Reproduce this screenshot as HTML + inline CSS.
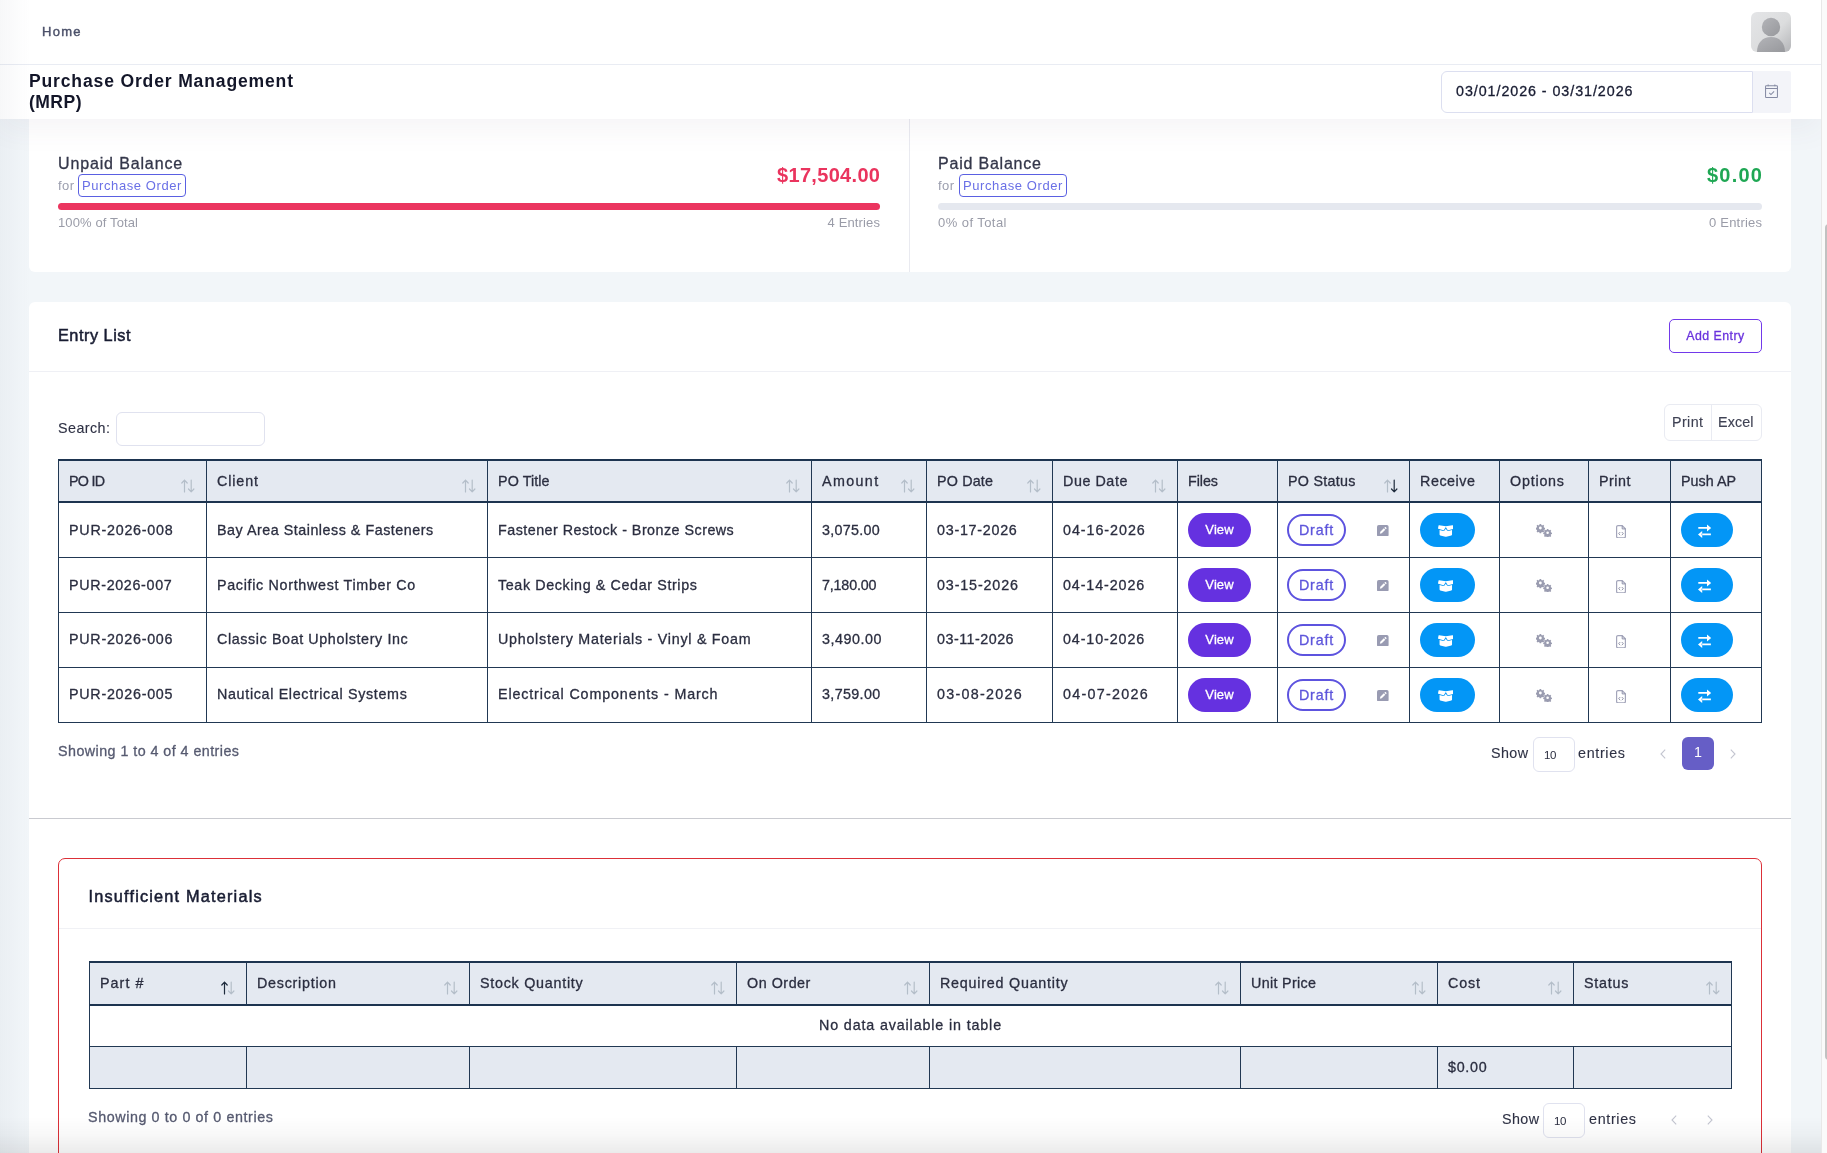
<!DOCTYPE html>
<html lang="en">
<head>
<meta charset="utf-8">
<title>Purchase Order Management (MRP)</title>
<style>
*{box-sizing:border-box;margin:0;padding:0}
html,body{width:1827px;height:1153px;overflow:hidden}
body{position:relative;background:#f2f6f9;font-family:"Liberation Sans",sans-serif;font-size:14.3px;color:#2b2e40;-webkit-font-smoothing:antialiased}
#page{position:absolute;left:0;top:0;width:1827px;height:1153px;overflow:hidden;will-change:transform}
.f{white-space:nowrap;display:inline-block}
.m{-webkit-text-stroke:.3px currentColor}
.abs{position:absolute}
/* page gradient from sidebar shadow */
#lshade{left:0;top:0;width:30px;height:1153px;background:linear-gradient(90deg,rgba(110,120,140,.055),rgba(110,120,140,0));z-index:50;pointer-events:none}
#bshade{left:0;top:1117px;width:1821px;height:36px;background:linear-gradient(180deg,rgba(0,0,0,0),rgba(0,0,0,.028) 50%,rgba(0,0,0,.078));z-index:50;pointer-events:none}
/* scrollbar */
#sb{left:1821px;top:0;width:6px;height:1153px;background:#fafafa;border-left:1px solid #e8e8e8;z-index:60}
#sbt{left:3px;top:224px;width:8px;height:836px;background:#c1c1c1;border-radius:4px}
/* top header */
#top{left:0;top:0;width:1821px;height:65px;background:#fff;border-bottom:1px solid #e9ecf3;z-index:20}
#home{left:42px;top:24px;font-size:13px;color:#4b5069;line-height:16px;-webkit-text-stroke:.4px currentColor}
#avatar{left:1751px;top:12px;width:40px;height:40px;border-radius:6px;overflow:hidden}
/* sub header */
#sub{left:0;top:65px;width:1821px;height:54px;background:#fff;z-index:19;box-shadow:0 10px 30px rgba(82,63,105,.06)}
#title{left:29px;top:6px;font-size:17.55px;line-height:21px;font-weight:700;color:#131629}
#date{left:1441px;top:6px;width:312px;height:42px;border:1px solid #dcdff0;border-radius:6px 0 0 6px;background:#fff}
#date .f{position:absolute;left:14px;top:11px;line-height:16px;color:#181c32}
#cal{left:1753px;top:6px;width:38px;height:42px;background:#f3f4f9;border-radius:0 2px 2px 0}
/* card 1 */
#c1{left:29px;top:100px;width:1762px;height:172px;background:#fff;border-radius:6px;z-index:1}
#c1 .vd{left:880px;top:0;width:1px;height:172px;background:#e9eaf0}
.bal{position:absolute;top:0;height:171px}
.bal .h{position:absolute;left:0;top:55px;font-size:16px;line-height:18px;color:#34374a}
.bal .for{position:absolute;left:0;top:78px;font-size:13px;line-height:16px;color:#9b9eae}
.bal .bdg{position:absolute;top:74px;height:23px;width:108px;border:1px solid #5a60e2;border-radius:4px;font-size:13px;line-height:21px;color:#6a70e6;text-align:center}
.bal .amt{position:absolute;right:0;top:63px;font-size:20px;line-height:24px;font-weight:700}
.bal .bar{position:absolute;left:0;top:103px;height:7px;width:100%;border-radius:4px;background:#e5e8ef}
.bal .pl{position:absolute;left:0;top:115px;font-size:13px;line-height:16px;color:#9a9ca8}
.bal .pr{position:absolute;right:0;top:115px;font-size:13px;line-height:16px;color:#9a9ca8}
/* card 2 */
#c2{left:29px;top:302px;width:1762px;height:900px;background:#fff;border-radius:6px 6px 0 0;z-index:1}
#c2h{left:0;top:0;width:1762px;height:70px;border-bottom:1px solid #eff0f5}
#c2h .ttl{position:absolute;left:29px;top:23px;-webkit-text-stroke:.5px currentColor;font-size:16.3px;line-height:20px;color:#181c32}
#add{left:1640px;top:17px;width:93px;height:34px;border:1px solid #7239ea;border-radius:5px;color:#6a33dd;font-size:12.35px;line-height:32px;text-align:center}
#srch{left:29px;top:118px;line-height:16px;color:#2f3245;-webkit-text-stroke:.12px currentColor}
#sin{left:87px;top:110px;width:149px;height:34px;border:1px solid #e0e2ef;border-radius:6px}
#btns{left:1635px;top:102px;width:98px;height:37px;border:1px solid #e9ebf2;border-radius:6px}
#btns i{position:absolute;left:46px;top:0;width:1px;height:35px;background:#e9ebf2}
#btns .f{position:absolute;top:9px;line-height:16px;color:#3f4254;-webkit-text-stroke:.12px currentColor}
table{border-collapse:separate;border-spacing:0;table-layout:fixed}
th,td{border-left:1px solid #213853;border-bottom:1px solid #213853;padding:0 0 0 10px;text-align:left;vertical-align:middle;font-weight:400;position:relative;white-space:nowrap}
th:last-child,td:last-child{border-right:1px solid #213853}
thead th{background:#e4e9f1;border-top:2px solid #1d3450;border-bottom:2px solid #1d3450;height:44px;color:#2b2e40}
#t2 thead th{height:45px}
tfoot td{background:#e4e9f1;height:42px}
#t1{left:29px;top:157px;width:1704px}
#t1 td{height:55px}
#t2 tbody td{height:41px}
#t2 .f{position:relative;top:-1px}
.so{position:absolute;right:11px;top:18px;width:14px;height:14px}
.pill{display:inline-block;height:34px;border-radius:17px;vertical-align:middle;text-align:center}
.view{width:63px;background:#6531e0;color:#fff;font-size:13px;line-height:34px}
.draft{width:59px;height:32px;border:2px solid #5d53df;color:#5d55db;line-height:28px;background:#fff}
.rcv{width:55px;background:#0396f6}
.psh{width:52px;background:#0396f6}
.ic{position:absolute}
.info{color:#565a70;line-height:16px}
.len{line-height:16px;color:#2f3245;-webkit-text-stroke:.12px currentColor}
.sel{width:42px;height:35px;border:1px solid #e0e2ef;border-radius:6px;font-size:11.500px;letter-spacing:-.3px;line-height:35px;padding-left:10px;color:#2b2e40}
.pg{width:32px;height:33px;border-radius:6px;background:#665ec6;color:#fff;text-align:center;line-height:31px;font-size:14.3px}
.chev{width:6px;height:10px}
#hr{left:0;top:516px;width:1762px;height:1px;background:#c9cad0}
/* card 3 */
#c3{left:29px;top:556px;width:1704px;height:400px;border:1px solid #dc3038;border-radius:7px 7px 0 0;background:#fff}
#c3h{left:0;top:0;width:1702px;height:70px;border-bottom:1px solid #f0f1f5}
#c3h .ttl{position:absolute;left:29.500px;top:27px;-webkit-text-stroke:.5px currentColor;font-size:16.3px;line-height:20px;color:#181c32}
#t2{left:30px;top:102px;width:1643px}
</style>
</head>
<body>
<div id="page">
<div id="lshade" class="abs"></div>
<div id="bshade" class="abs"></div>
<div id="sb" class="abs"><div id="sbt" class="abs"></div></div>

<div id="top" class="abs">
  <a id="home" class="abs f m" style="letter-spacing:1.27px">Home</a>
  <div id="avatar" class="abs">
    <svg width="40" height="40" viewBox="0 0 40 40"><defs><linearGradient id="ag" x1="0" y1="0" x2="1" y2="1"><stop offset="0" stop-color="#e4e5e7"/><stop offset=".55" stop-color="#dcddde"/><stop offset="1" stop-color="#b4b5b8"/></linearGradient><linearGradient id="ap" x1="0" y1="0" x2="1" y2="1"><stop offset="0" stop-color="#b3b4b8"/><stop offset="1" stop-color="#97989c"/></linearGradient></defs><rect width="40" height="40" fill="url(#ag)"/><circle cx="20" cy="15" r="9.2" fill="url(#ap)"/><path d="M6 40c0-9 5.5-15 14-15s14 6 14 15z" fill="url(#ap)"/></svg>
  </div>
</div>

<div id="sub" class="abs">
  <h1 id="title" class="abs"><span class="f" style="letter-spacing:0.85px">Purchase Order Management</span><br><span class="f" style="letter-spacing:0.46px">(MRP)</span></h1>
  <div id="date" class="abs"><span class="f m" style="letter-spacing:0.94px">03/01/2026 - 03/31/2026</span></div>
  <div id="cal" class="abs">
    <svg class="ic" style="left:12px;top:13px" width="13" height="14.200" viewBox="0 0 14 15" fill="none" stroke="#858aa3" stroke-width="1.1"><rect x=".6" y="1.8" width="12.8" height="12.6" rx=".8"/><path d="M.6 4.6h12.8M3.4 .4v2M10.6 .4v2M4.6 9.4l1.8 1.8 3.4-3.4"/></svg>
  </div>
</div>

<div id="c1" class="abs">
  <div class="vd abs"></div>
  <div class="bal" style="left:29px;width:822px">
    <div class="h f m" style="letter-spacing:0.86px">Unpaid Balance</div>
    <div class="for f" style="letter-spacing:0.41px">for</div>
    <div class="bdg" style="left:20px"><span class="f" style="letter-spacing:0.59px">Purchase Order</span></div>
    <div class="amt f" style="color:#ea345e;letter-spacing:0.32px;margin-right:-0.32px">$17,504.00</div>
    <div class="bar" style="background:#eb355f"></div>
    <div class="pl f" style="letter-spacing:0.12px">100% of Total</div>
    <div class="pr f" style="letter-spacing:0.15px;margin-right:-0.15px">4 Entries</div>
  </div>
  <div class="bal" style="left:909px;width:824px">
    <div class="h f m" style="letter-spacing:0.79px">Paid Balance</div>
    <div class="for f" style="letter-spacing:0.41px">for</div>
    <div class="bdg" style="left:21px"><span class="f" style="letter-spacing:0.59px">Purchase Order</span></div>
    <div class="amt f" style="color:#1fa754;letter-spacing:1.23px;margin-right:-1.23px">$0.00</div>
    <div class="bar"></div>
    <div class="pl f" style="letter-spacing:0.44px">0% of Total</div>
    <div class="pr f" style="letter-spacing:0.21px;margin-right:-0.21px">0 Entries</div>
  </div>
</div>

<div id="c2" class="abs">
  <div id="c2h" class="abs">
    <h3 class="ttl f m" style="letter-spacing:0.51px;font-weight:400">Entry List</h3>
    <a id="add" class="abs"><span class="f m" style="letter-spacing:0.47px">Add Entry</span></a>
  </div>
  <label id="srch" class="abs f" style="letter-spacing:0.45px">Search:</label>
  <div id="sin" class="abs"></div>
  <div id="btns" class="abs"><i></i><span class="f" style="left:7px;letter-spacing:0.40px">Print</span><span class="f" style="left:53px;letter-spacing:0.13px">Excel</span></div>

  <table id="t1" class="abs">
    <colgroup><col style="width:148px"><col style="width:281px"><col style="width:324px"><col style="width:115px"><col style="width:126px"><col style="width:125px"><col style="width:100px"><col style="width:132px"><col style="width:90px"><col style="width:89px"><col style="width:82px"><col style="width:92px"></colgroup>
    <thead><tr>
      <th><span class="f m" style="letter-spacing:-0.73px">PO ID</span><svg class="so" viewBox="0 0 14 14" fill="none" stroke-width="1.2" stroke-linecap="round" stroke-linejoin="round"><path stroke="#b4bec9" d="M3.5 13V1.2M.8 4L3.5 1.1 6.2 4"/><path stroke="#b4bec9" d="M10.2 1v11.8M7.5 10l2.7 2.9 2.7-2.9"/></svg></th>
      <th><span class="f m" style="letter-spacing:0.89px">Client</span><svg class="so" viewBox="0 0 14 14" fill="none" stroke-width="1.2" stroke-linecap="round" stroke-linejoin="round"><path stroke="#b4bec9" d="M3.5 13V1.2M.8 4L3.5 1.1 6.2 4"/><path stroke="#b4bec9" d="M10.2 1v11.8M7.5 10l2.7 2.9 2.7-2.9"/></svg></th>
      <th><span class="f m" style="letter-spacing:0.09px">PO Title</span><svg class="so" viewBox="0 0 14 14" fill="none" stroke-width="1.2" stroke-linecap="round" stroke-linejoin="round"><path stroke="#b4bec9" d="M3.5 13V1.2M.8 4L3.5 1.1 6.2 4"/><path stroke="#b4bec9" d="M10.2 1v11.8M7.5 10l2.7 2.9 2.7-2.9"/></svg></th>
      <th><span class="f m" style="letter-spacing:1.38px">Amount</span><svg class="so" viewBox="0 0 14 14" fill="none" stroke-width="1.2" stroke-linecap="round" stroke-linejoin="round"><path stroke="#b4bec9" d="M3.5 13V1.2M.8 4L3.5 1.1 6.2 4"/><path stroke="#b4bec9" d="M10.2 1v11.8M7.5 10l2.7 2.9 2.7-2.9"/></svg></th>
      <th><span class="f m" style="letter-spacing:0.18px">PO Date</span><svg class="so" viewBox="0 0 14 14" fill="none" stroke-width="1.2" stroke-linecap="round" stroke-linejoin="round"><path stroke="#b4bec9" d="M3.5 13V1.2M.8 4L3.5 1.1 6.2 4"/><path stroke="#b4bec9" d="M10.2 1v11.8M7.5 10l2.7 2.9 2.7-2.9"/></svg></th>
      <th><span class="f m" style="letter-spacing:0.57px">Due Date</span><svg class="so" viewBox="0 0 14 14" fill="none" stroke-width="1.2" stroke-linecap="round" stroke-linejoin="round"><path stroke="#b4bec9" d="M3.5 13V1.2M.8 4L3.5 1.1 6.2 4"/><path stroke="#b4bec9" d="M10.2 1v11.8M7.5 10l2.7 2.9 2.7-2.9"/></svg></th>
      <th><span class="f m" style="letter-spacing:-0.05px">Files</span></th>
      <th><span class="f m" style="letter-spacing:0.29px">PO Status</span><svg class="so" viewBox="0 0 14 14" fill="none" stroke-width="1.2" stroke-linecap="round" stroke-linejoin="round"><path stroke="#b4bec9" d="M3.5 13V1.2M.8 4L3.5 1.1 6.2 4"/><path stroke="#1e2b3c" d="M10.2 1v11.8M7.5 10l2.7 2.9 2.7-2.9"/></svg></th>
      <th><span class="f m" style="letter-spacing:0.56px">Receive</span></th>
      <th><span class="f m" style="letter-spacing:0.79px">Options</span></th>
      <th><span class="f m" style="letter-spacing:0.52px">Print</span></th>
      <th><span class="f m" style="letter-spacing:0.03px">Push AP</span></th>
    </tr></thead>
    <tbody>
      <tr><td><span class="f m" style="letter-spacing:0.76px">PUR-2026-008</span></td><td><span class="f m" style="letter-spacing:0.52px">Bay Area Stainless &amp; Fasteners</span></td><td><span class="f m" style="letter-spacing:0.48px">Fastener Restock - Bronze Screws</span></td><td><span class="f m" style="letter-spacing:0.29px">3,075.00</span></td><td><span class="f m" style="letter-spacing:0.74px">03-17-2026</span></td><td><span class="f m" style="letter-spacing:0.96px">04-16-2026</span></td><td><a class="pill view"><span class="f m" style="letter-spacing:0.08px">View</span></a></td><td><a class="pill draft" style="margin-left:-1px"><span class="f m" style="letter-spacing:0.83px">Draft</span></a><svg class="ic" style="left:99.200px;top:21.500px" width="11.600" height="11.600" viewBox="0 0 12 12"><rect width="12" height="12" rx="1.800" fill="#999bb2"/><path d="M3 9l.4-1.9 3.7-3.7 1.5 1.5-3.7 3.7zM7.6 2.9l.6-.6c.3-.3.7-.3 1 0l.5.5c.3.3.3.7 0 1l-.6.6z" fill="#fff"/></svg></td><td><a class="pill rcv"><svg width="15.600" height="11.700" viewBox="0 0 16 12.400" preserveAspectRatio="none" style="margin-top:12px;position:relative;left:-2px"><path fill="#fff" d="M1.2 0.3L8 1.2l6.8-.9c.3 0 .5.1.6.3L16 3.4c.1.3-.1.6-.4.7L10.6 5.5c-.3.1-.6 0-.7-.3L8 2.2 6.100 5.2c-.1.3-.4.4-.7.3L.4 4.100C.1 4 -.1 3.700 0 3.400L.6.6c.1-.2.3-.3.6-.3zM1.600 5.400l3.600 1c.7.2 1.400-.1 1.700-.7L8 3.900l1.100 1.800c.3.6 1 .9 1.700.7l3.600-1v4.800c0 .4-.3.8-.7.9l-5.300 1.300c-.3.1-.5.1-.8 0L2.300 11.100c-.4-.1-.7-.5-.7-.9z"/></svg></a></td><td><svg class="ic" style="left:36px;top:21px" width="16" height="13" viewBox="0 0 17 14" fill="#9a9cb0"><g transform="translate(4.600 4.300)"><path d="M-.8-4.300h1.600l.3 1.100.9.400 1-.600 1.100 1.100-.6 1 .4.900 1.100.3v1.600l-1.100.3-.4.900.6 1-1.100 1.100-1-.6-.9.400-.3 1.100h-1.600l-.3-1.100-.9-.4-1 .6-1.100-1.100.6-1-.4-.9-1.100-.3v-1.600l1.100-.3.400-.9-.6-1 1.100-1.100 1 .6.900-.4zM0-1.500a1.500 1.500 0 100 3 1.500 1.500 0 000-3z"/></g><g transform="translate(12.400 9.400) scale(.95)"><path d="M-.8-4.300h1.600l.3 1.100.9.400 1-.600 1.100 1.100-.6 1 .4.900 1.100.3v1.600l-1.100.3-.4.900.6 1-1.100 1.100-1-.6-.9.400-.3 1.100h-1.600l-.3-1.100-.9-.4-1 .6-1.100-1.100.6-1-.4-.9-1.100-.3v-1.600l1.100-.3.400-.9-.6-1 1.100-1.100 1 .6.900-.4zM0-1.500a1.500 1.500 0 100 3 1.500 1.500 0 000-3z"/></g></svg></td><td><svg class="ic" style="left:27.100px;top:22px" width="10" height="13.400" viewBox="0 0 10 13.400" fill="none" stroke="#a3a5ba" stroke-width="1.200"><path d="M2 .6h4.200L9.400 3.800V11.400a1.400 1.400 0 01-1.400 1.400H2A1.400 1.400 0 01.6 11.400V2A1.400 1.400 0 012 .6z"/><path d="M6.200 .8V3.900h3.100" stroke="#8d8fa8" stroke-width="1"/><path d="M4.200 7.100L2.700 8.600l1.500 1.500M5.800 7.100l1.500 1.500-1.500 1.500" stroke="#7f8199" stroke-width=".9"/></svg></td><td><a class="pill psh"><svg width="13.200" height="13" viewBox="0 0 13.200 13" overflow="visible" style="margin-top:12px;position:relative;left:-2px" fill="#fff"><path d="M.3 2h9.300v1.800H.3zM9 -.6L13.200 2.900 9 6.400zM3.600 8.500h9.300v1.800H3.600zM4.200 5.900L0 9.400l4.200 3.500z"/></svg></a></td></tr>
      <tr><td><span class="f m" style="letter-spacing:0.67px">PUR-2026-007</span></td><td><span class="f m" style="letter-spacing:0.69px">Pacific Northwest Timber Co</span></td><td><span class="f m" style="letter-spacing:0.62px">Teak Decking &amp; Cedar Strips</span></td><td><span class="f m" style="letter-spacing:-0.17px">7,180.00</span></td><td><span class="f m" style="letter-spacing:0.87px">03-15-2026</span></td><td><span class="f m" style="letter-spacing:0.90px">04-14-2026</span></td><td><a class="pill view"><span class="f m" style="letter-spacing:0.08px">View</span></a></td><td><a class="pill draft" style="margin-left:-1px"><span class="f m" style="letter-spacing:0.83px">Draft</span></a><svg class="ic" style="left:99.200px;top:21.500px" width="11.600" height="11.600" viewBox="0 0 12 12"><rect width="12" height="12" rx="1.800" fill="#999bb2"/><path d="M3 9l.4-1.9 3.7-3.7 1.5 1.5-3.7 3.7zM7.6 2.9l.6-.6c.3-.3.7-.3 1 0l.5.5c.3.3.3.7 0 1l-.6.6z" fill="#fff"/></svg></td><td><a class="pill rcv"><svg width="15.600" height="11.700" viewBox="0 0 16 12.400" preserveAspectRatio="none" style="margin-top:12px;position:relative;left:-2px"><path fill="#fff" d="M1.2 0.3L8 1.2l6.8-.9c.3 0 .5.1.6.3L16 3.4c.1.3-.1.6-.4.7L10.6 5.5c-.3.1-.6 0-.7-.3L8 2.2 6.100 5.2c-.1.3-.4.4-.7.3L.4 4.100C.1 4 -.1 3.700 0 3.400L.6.6c.1-.2.3-.3.6-.3zM1.600 5.400l3.600 1c.7.2 1.400-.1 1.700-.7L8 3.900l1.100 1.800c.3.6 1 .9 1.700.7l3.600-1v4.800c0 .4-.3.8-.7.9l-5.300 1.300c-.3.1-.5.1-.8 0L2.300 11.100c-.4-.1-.7-.5-.7-.9z"/></svg></a></td><td><svg class="ic" style="left:36px;top:21px" width="16" height="13" viewBox="0 0 17 14" fill="#9a9cb0"><g transform="translate(4.600 4.300)"><path d="M-.8-4.300h1.600l.3 1.100.9.400 1-.600 1.100 1.100-.6 1 .4.900 1.100.3v1.600l-1.100.3-.4.900.6 1-1.100 1.100-1-.6-.9.400-.3 1.100h-1.600l-.3-1.100-.9-.4-1 .6-1.100-1.100.6-1-.4-.9-1.100-.3v-1.600l1.100-.3.400-.9-.6-1 1.100-1.100 1 .6.900-.4zM0-1.500a1.500 1.500 0 100 3 1.500 1.500 0 000-3z"/></g><g transform="translate(12.400 9.400) scale(.95)"><path d="M-.8-4.300h1.600l.3 1.100.9.400 1-.600 1.100 1.100-.6 1 .4.900 1.100.3v1.600l-1.100.3-.4.900.6 1-1.100 1.100-1-.6-.9.400-.3 1.100h-1.600l-.3-1.100-.9-.4-1 .6-1.100-1.100.6-1-.4-.9-1.100-.3v-1.600l1.100-.3.400-.9-.6-1 1.100-1.100 1 .6.900-.4zM0-1.500a1.500 1.500 0 100 3 1.500 1.500 0 000-3z"/></g></svg></td><td><svg class="ic" style="left:27.100px;top:22px" width="10" height="13.400" viewBox="0 0 10 13.400" fill="none" stroke="#a3a5ba" stroke-width="1.200"><path d="M2 .6h4.200L9.400 3.800V11.400a1.400 1.400 0 01-1.400 1.400H2A1.400 1.400 0 01.6 11.400V2A1.400 1.400 0 012 .6z"/><path d="M6.200 .8V3.900h3.100" stroke="#8d8fa8" stroke-width="1"/><path d="M4.200 7.100L2.700 8.600l1.500 1.500M5.800 7.100l1.500 1.500-1.500 1.500" stroke="#7f8199" stroke-width=".9"/></svg></td><td><a class="pill psh"><svg width="13.200" height="13" viewBox="0 0 13.200 13" overflow="visible" style="margin-top:12px;position:relative;left:-2px" fill="#fff"><path d="M.3 2h9.300v1.800H.3zM9 -.6L13.200 2.900 9 6.400zM3.600 8.500h9.300v1.800H3.600zM4.200 5.900L0 9.400l4.200 3.500z"/></svg></a></td></tr>
      <tr><td><span class="f m" style="position:relative;top:-1px;letter-spacing:0.74px">PUR-2026-006</span></td><td><span class="f m" style="position:relative;top:-1px;letter-spacing:0.61px">Classic Boat Upholstery Inc</span></td><td><span class="f m" style="position:relative;top:-1px;letter-spacing:0.73px">Upholstery Materials - Vinyl &amp; Foam</span></td><td><span class="f m" style="position:relative;top:-1px;letter-spacing:0.53px">3,490.00</span></td><td><span class="f m" style="position:relative;top:-1px;letter-spacing:0.50px">03-11-2026</span></td><td><span class="f m" style="position:relative;top:-1px;letter-spacing:0.90px">04-10-2026</span></td><td><a class="pill view"><span class="f m" style="letter-spacing:0.08px">View</span></a></td><td><a class="pill draft" style="margin-left:-1px"><span class="f m" style="letter-spacing:0.83px">Draft</span></a><svg class="ic" style="left:99.200px;top:21.500px" width="11.600" height="11.600" viewBox="0 0 12 12"><rect width="12" height="12" rx="1.800" fill="#999bb2"/><path d="M3 9l.4-1.9 3.7-3.7 1.5 1.5-3.7 3.7zM7.6 2.9l.6-.6c.3-.3.7-.3 1 0l.5.5c.3.3.3.7 0 1l-.6.6z" fill="#fff"/></svg></td><td><a class="pill rcv"><svg width="15.600" height="11.700" viewBox="0 0 16 12.400" preserveAspectRatio="none" style="margin-top:12px;position:relative;left:-2px"><path fill="#fff" d="M1.2 0.3L8 1.2l6.8-.9c.3 0 .5.1.6.3L16 3.4c.1.3-.1.6-.4.7L10.6 5.5c-.3.1-.6 0-.7-.3L8 2.2 6.100 5.2c-.1.3-.4.4-.7.3L.4 4.100C.1 4 -.1 3.700 0 3.400L.6.6c.1-.2.3-.3.6-.3zM1.600 5.400l3.600 1c.7.2 1.400-.1 1.700-.7L8 3.900l1.100 1.800c.3.6 1 .9 1.700.7l3.600-1v4.800c0 .4-.3.8-.7.9l-5.300 1.300c-.3.1-.5.1-.8 0L2.300 11.100c-.4-.1-.7-.5-.7-.9z"/></svg></a></td><td><svg class="ic" style="left:36px;top:21px" width="16" height="13" viewBox="0 0 17 14" fill="#9a9cb0"><g transform="translate(4.600 4.300)"><path d="M-.8-4.300h1.600l.3 1.100.9.400 1-.600 1.100 1.100-.6 1 .4.900 1.100.3v1.600l-1.100.3-.4.900.6 1-1.100 1.100-1-.6-.9.400-.3 1.100h-1.600l-.3-1.100-.9-.4-1 .6-1.100-1.100.6-1-.4-.9-1.100-.3v-1.600l1.100-.3.400-.9-.6-1 1.100-1.100 1 .6.900-.4zM0-1.500a1.500 1.500 0 100 3 1.500 1.500 0 000-3z"/></g><g transform="translate(12.400 9.400) scale(.95)"><path d="M-.8-4.300h1.600l.3 1.100.9.400 1-.600 1.100 1.100-.6 1 .4.900 1.100.3v1.600l-1.100.3-.4.900.6 1-1.100 1.100-1-.6-.9.400-.3 1.100h-1.600l-.3-1.100-.9-.4-1 .6-1.100-1.100.6-1-.4-.9-1.100-.3v-1.600l1.100-.3.400-.9-.6-1 1.100-1.100 1 .6.900-.4zM0-1.500a1.500 1.500 0 100 3 1.500 1.500 0 000-3z"/></g></svg></td><td><svg class="ic" style="left:27.100px;top:22px" width="10" height="13.400" viewBox="0 0 10 13.400" fill="none" stroke="#a3a5ba" stroke-width="1.200"><path d="M2 .6h4.200L9.400 3.800V11.400a1.400 1.400 0 01-1.400 1.400H2A1.400 1.400 0 01.6 11.400V2A1.400 1.400 0 012 .6z"/><path d="M6.200 .8V3.900h3.100" stroke="#8d8fa8" stroke-width="1"/><path d="M4.200 7.100L2.700 8.600l1.500 1.500M5.800 7.100l1.500 1.500-1.500 1.500" stroke="#7f8199" stroke-width=".9"/></svg></td><td><a class="pill psh"><svg width="13.200" height="13" viewBox="0 0 13.200 13" overflow="visible" style="margin-top:12px;position:relative;left:-2px" fill="#fff"><path d="M.3 2h9.300v1.800H.3zM9 -.6L13.200 2.900 9 6.400zM3.600 8.500h9.300v1.800H3.600zM4.200 5.900L0 9.400l4.200 3.500z"/></svg></a></td></tr>
      <tr><td><span class="f m" style="position:relative;top:-1px;letter-spacing:0.74px">PUR-2026-005</span></td><td><span class="f m" style="position:relative;top:-1px;letter-spacing:0.67px">Nautical Electrical Systems</span></td><td><span class="f m" style="position:relative;top:-1px;letter-spacing:0.86px">Electrical Components - March</span></td><td><span class="f m" style="position:relative;top:-1px;letter-spacing:0.36px">3,759.00</span></td><td><span class="f m" style="position:relative;top:-1px;letter-spacing:1.28px">03-08-2026</span></td><td><span class="f m" style="position:relative;top:-1px;letter-spacing:1.28px">04-07-2026</span></td><td><a class="pill view"><span class="f m" style="letter-spacing:0.08px">View</span></a></td><td><a class="pill draft" style="margin-left:-1px"><span class="f m" style="letter-spacing:0.83px">Draft</span></a><svg class="ic" style="left:99.200px;top:21.500px" width="11.600" height="11.600" viewBox="0 0 12 12"><rect width="12" height="12" rx="1.800" fill="#999bb2"/><path d="M3 9l.4-1.9 3.7-3.7 1.5 1.5-3.7 3.7zM7.6 2.9l.6-.6c.3-.3.7-.3 1 0l.5.5c.3.3.3.7 0 1l-.6.6z" fill="#fff"/></svg></td><td><a class="pill rcv"><svg width="15.600" height="11.700" viewBox="0 0 16 12.400" preserveAspectRatio="none" style="margin-top:12px;position:relative;left:-2px"><path fill="#fff" d="M1.2 0.3L8 1.2l6.8-.9c.3 0 .5.1.6.3L16 3.4c.1.3-.1.6-.4.7L10.6 5.5c-.3.1-.6 0-.7-.3L8 2.2 6.100 5.2c-.1.3-.4.4-.7.3L.4 4.100C.1 4 -.1 3.700 0 3.400L.6.6c.1-.2.3-.3.6-.3zM1.600 5.400l3.600 1c.7.2 1.400-.1 1.700-.7L8 3.900l1.100 1.800c.3.6 1 .9 1.700.7l3.600-1v4.800c0 .4-.3.8-.7.9l-5.300 1.300c-.3.1-.5.1-.8 0L2.300 11.100c-.4-.1-.7-.5-.7-.9z"/></svg></a></td><td><svg class="ic" style="left:36px;top:21px" width="16" height="13" viewBox="0 0 17 14" fill="#9a9cb0"><g transform="translate(4.600 4.300)"><path d="M-.8-4.300h1.600l.3 1.100.9.400 1-.600 1.100 1.100-.6 1 .4.900 1.100.3v1.600l-1.100.3-.4.900.6 1-1.100 1.100-1-.6-.9.400-.3 1.100h-1.600l-.3-1.100-.9-.4-1 .6-1.100-1.100.6-1-.4-.9-1.100-.3v-1.600l1.100-.3.400-.9-.6-1 1.100-1.100 1 .6.900-.4zM0-1.500a1.500 1.500 0 100 3 1.500 1.500 0 000-3z"/></g><g transform="translate(12.400 9.400) scale(.95)"><path d="M-.8-4.300h1.600l.3 1.100.9.400 1-.600 1.100 1.100-.6 1 .4.900 1.100.3v1.600l-1.100.3-.4.900.6 1-1.100 1.100-1-.6-.9.400-.3 1.100h-1.600l-.3-1.100-.9-.4-1 .6-1.100-1.100.6-1-.4-.9-1.100-.3v-1.600l1.100-.3.400-.9-.6-1 1.100-1.100 1 .6.900-.4zM0-1.500a1.500 1.500 0 100 3 1.500 1.500 0 000-3z"/></g></svg></td><td><svg class="ic" style="left:27.100px;top:22px" width="10" height="13.400" viewBox="0 0 10 13.400" fill="none" stroke="#a3a5ba" stroke-width="1.200"><path d="M2 .6h4.200L9.400 3.800V11.400a1.400 1.400 0 01-1.400 1.400H2A1.400 1.400 0 01.6 11.400V2A1.400 1.400 0 012 .6z"/><path d="M6.200 .8V3.900h3.100" stroke="#8d8fa8" stroke-width="1"/><path d="M4.200 7.100L2.700 8.600l1.500 1.500M5.800 7.100l1.500 1.500-1.500 1.500" stroke="#7f8199" stroke-width=".9"/></svg></td><td><a class="pill psh"><svg width="13.200" height="13" viewBox="0 0 13.200 13" overflow="visible" style="margin-top:12px;position:relative;left:-2px" fill="#fff"><path d="M.3 2h9.300v1.800H.3zM9 -.6L13.200 2.900 9 6.400zM3.600 8.500h9.300v1.800H3.600zM4.200 5.900L0 9.400l4.200 3.500z"/></svg></a></td></tr>
    </tbody>
  </table>

  <div class="info abs f m" style="left:29px;top:441px;letter-spacing:0.45px">Showing 1 to 4 of 4 entries</div>
  <div class="len abs f" style="left:1462px;top:443px;letter-spacing:0.41px">Show</div>
  <div class="sel abs" style="left:1504px;top:435px">10</div>
  <div class="len abs f" style="left:1549px;top:443px;letter-spacing:0.68px">entries</div>
  <svg class="chev abs" style="left:1631px;top:447px" viewBox="0 0 6 10" fill="none" stroke="#c3c5d0" stroke-width="1.1"><path d="M5.2 .7L1 5l4.2 4.3"/></svg>
  <div class="pg abs" style="left:1653px;top:435px">1</div>
  <svg class="chev abs" style="left:1701px;top:447px" viewBox="0 0 6 10" fill="none" stroke="#c3c5d0" stroke-width="1.1"><path d="M.8 .7L5 5 .8 9.3"/></svg>

  <div id="hr" class="abs"></div>

  <div id="c3" class="abs">
    <div id="c3h" class="abs"><h3 class="ttl f m" style="letter-spacing:1.19px;font-weight:400">Insufficient Materials</h3></div>
    <table id="t2" class="abs">
      <colgroup><col style="width:157px"><col style="width:223px"><col style="width:267px"><col style="width:193px"><col style="width:311px"><col style="width:197px"><col style="width:136px"><col style="width:159px"></colgroup>
      <thead><tr>
        <th><span class="f m" style="letter-spacing:1.05px">Part #</span><svg class="so" viewBox="0 0 14 14" fill="none" stroke-width="1.2" stroke-linecap="round" stroke-linejoin="round"><path stroke="#1e2b3c" d="M3.5 13V1.2M.8 4L3.5 1.1 6.2 4"/><path stroke="#b4bec9" d="M10.2 1v11.8M7.5 10l2.7 2.9 2.7-2.9"/></svg></th>
        <th><span class="f m" style="letter-spacing:0.75px">Description</span><svg class="so" viewBox="0 0 14 14" fill="none" stroke-width="1.2" stroke-linecap="round" stroke-linejoin="round"><path stroke="#b4bec9" d="M3.5 13V1.2M.8 4L3.5 1.1 6.2 4"/><path stroke="#b4bec9" d="M10.2 1v11.8M7.5 10l2.7 2.9 2.7-2.9"/></svg></th>
        <th><span class="f m" style="letter-spacing:0.75px">Stock Quantity</span><svg class="so" viewBox="0 0 14 14" fill="none" stroke-width="1.2" stroke-linecap="round" stroke-linejoin="round"><path stroke="#b4bec9" d="M3.5 13V1.2M.8 4L3.5 1.1 6.2 4"/><path stroke="#b4bec9" d="M10.2 1v11.8M7.5 10l2.7 2.9 2.7-2.9"/></svg></th>
        <th><span class="f m" style="letter-spacing:0.54px">On Order</span><svg class="so" viewBox="0 0 14 14" fill="none" stroke-width="1.2" stroke-linecap="round" stroke-linejoin="round"><path stroke="#b4bec9" d="M3.5 13V1.2M.8 4L3.5 1.1 6.2 4"/><path stroke="#b4bec9" d="M10.2 1v11.8M7.5 10l2.7 2.9 2.7-2.9"/></svg></th>
        <th><span class="f m" style="letter-spacing:0.78px">Required Quantity</span><svg class="so" viewBox="0 0 14 14" fill="none" stroke-width="1.2" stroke-linecap="round" stroke-linejoin="round"><path stroke="#b4bec9" d="M3.5 13V1.2M.8 4L3.5 1.1 6.2 4"/><path stroke="#b4bec9" d="M10.2 1v11.8M7.5 10l2.7 2.9 2.7-2.9"/></svg></th>
        <th><span class="f m" style="letter-spacing:0.34px">Unit Price</span><svg class="so" viewBox="0 0 14 14" fill="none" stroke-width="1.2" stroke-linecap="round" stroke-linejoin="round"><path stroke="#b4bec9" d="M3.5 13V1.2M.8 4L3.5 1.1 6.2 4"/><path stroke="#b4bec9" d="M10.2 1v11.8M7.5 10l2.7 2.9 2.7-2.9"/></svg></th>
        <th><span class="f m" style="letter-spacing:0.86px">Cost</span><svg class="so" viewBox="0 0 14 14" fill="none" stroke-width="1.2" stroke-linecap="round" stroke-linejoin="round"><path stroke="#b4bec9" d="M3.5 13V1.2M.8 4L3.5 1.1 6.2 4"/><path stroke="#b4bec9" d="M10.2 1v11.8M7.5 10l2.7 2.9 2.7-2.9"/></svg></th>
        <th><span class="f m" style="letter-spacing:0.77px">Status</span><svg class="so" viewBox="0 0 14 14" fill="none" stroke-width="1.2" stroke-linecap="round" stroke-linejoin="round"><path stroke="#b4bec9" d="M3.5 13V1.2M.8 4L3.5 1.1 6.2 4"/><path stroke="#b4bec9" d="M10.2 1v11.8M7.5 10l2.7 2.9 2.7-2.9"/></svg></th>
      </tr></thead>
      <tbody><tr><td colspan="8" style="text-align:center;padding:0"><span class="f m" style="letter-spacing:0.86px">No data available in table</span></td></tr></tbody>
      <tfoot><tr><td></td><td></td><td></td><td></td><td></td><td></td><td><span class="f m" style="letter-spacing:0.73px">$0.00</span></td><td></td></tr></tfoot>
    </table>
    <div class="info abs f m" style="left:29px;top:250px;letter-spacing:0.60px">Showing 0 to 0 of 0 entries</div>
    <div class="len abs f" style="left:1443px;top:252px;letter-spacing:0.41px">Show</div>
    <div class="sel abs" style="left:1484px;top:244px">10</div>
    <div class="len abs f" style="left:1530px;top:252px;letter-spacing:0.68px">entries</div>
    <svg class="chev abs" style="left:1612px;top:256px" viewBox="0 0 6 10" fill="none" stroke="#c3c5d0" stroke-width="1.1"><path d="M5.2 .7L1 5l4.2 4.3"/></svg>
    <svg class="chev abs" style="left:1648px;top:256px" viewBox="0 0 6 10" fill="none" stroke="#c3c5d0" stroke-width="1.1"><path d="M.8 .7L5 5 .8 9.3"/></svg>
  </div>
</div>
</div>
</body>
</html>
